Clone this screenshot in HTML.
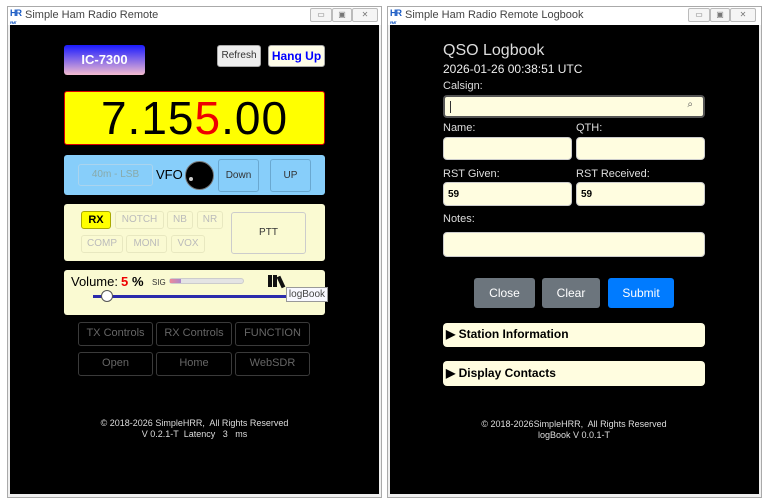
<!DOCTYPE html>
<html><head><style>
*{box-sizing:border-box;margin:0;padding:0}
body{width:767px;height:501px;background:#fff;position:relative;overflow:hidden;font-family:"Liberation Sans",Arial,sans-serif}
.a{position:absolute}
.win{position:absolute;top:6px;height:492px;border:1px solid #aaa;background:#f0f0f0}
.tb{position:absolute;left:0;right:0;top:0;height:18px;background:#fff;font-size:11px;color:#444;line-height:17px;padding-left:17px}
.logo{position:absolute;left:2px;top:2px;font-size:9px;font-weight:bold;color:#1a5bc4;line-height:8px;letter-spacing:-1px}
.ctl{position:absolute;top:1px;height:14px;border:1px solid #bbb;background:#f5f5f5;border-radius:2px;font-size:8px;color:#777;text-align:center;line-height:12px}
.blk{position:absolute;left:2px;right:2px;top:18px;bottom:3px;background:#000}
.btn{position:absolute;border-radius:3px;text-align:center;font-size:10px}
.dk{border:1px solid #3a3a3a;color:#666;line-height:21px;font-size:11px}
.inp{position:absolute;background:#fffde0;border-radius:4px;border:1px solid #ccc}
.lbl{position:absolute;color:#ddd;font-size:11px}
</style></head><body>
<div class="win" style="left:7px;width:375px">
 <div class="tb"><span class="logo">HR<br><span style="font-size:4px">RMT</span></span>Simple Ham Radio Remote
  <div class="ctl" style="left:302px;width:22px">▭</div><div class="ctl" style="left:324px;width:20px">▣</div><div class="ctl" style="left:344px;width:26px">✕</div></div>
 <div class="blk"></div>
</div>
<div class="win" style="left:387px;width:375px">
 <div class="tb"><span class="logo">HR<br><span style="font-size:4px">RMT</span></span>Simple Ham Radio Remote Logbook
  <div class="ctl" style="left:300px;width:22px">▭</div><div class="ctl" style="left:322px;width:20px">▣</div><div class="ctl" style="left:342px;width:26px">✕</div></div>
 <div class="blk"></div>
</div>

<div class="btn" style="left:64px;top:45px;width:81px;height:30px;background:linear-gradient(#1a1aff,#f4bcd0);color:#fff;font-weight:bold;font-size:13px;line-height:30px">IC-7300</div>
<div class="btn" style="left:217px;top:45px;width:44px;height:22px;background:#eee;border:1px solid #aaa;font-size:10px;line-height:20px;color:#333">Refresh</div>
<div class="btn" style="left:268px;top:45px;width:57px;height:22px;background:#fffde8;border:1px solid #aaa;font-size:12px;font-weight:bold;color:#00f;line-height:20px">Hang Up</div>
<div class="a" style="left:64px;top:91px;width:261px;height:54px;background:#ff0;border:1px solid #d00;border-radius:3px;text-align:center;font-size:46px;line-height:52px;color:#000;letter-spacing:1px">7.15<span style="color:#e00">5</span>.00</div>
<div class="a" style="left:64px;top:155px;width:261px;height:40px;background:#87cefa;border-radius:3px"></div>
<div class="btn" style="left:78px;top:164px;width:75px;height:22px;border:1px solid #aad4ee;color:#8aa;line-height:20px">40m - LSB</div>
<div class="a" style="left:156px;top:167px;font-size:13px">VFO</div>
<div class="a" style="left:185px;top:161px;width:29px;height:29px;border-radius:50%;background:#000;border:1px solid #777"></div>
<div class="a" style="left:189px;top:177px;width:4px;height:4px;border-radius:50%;background:#ccc"></div>
<div class="btn" style="left:218px;top:159px;width:41px;height:33px;border:1px solid #6aa8d0;line-height:31px;color:#333">Down</div>
<div class="btn" style="left:270px;top:159px;width:41px;height:33px;border:1px solid #6aa8d0;line-height:31px;color:#333">UP</div>

<div class="a" style="left:64px;top:204px;width:261px;height:57px;background:#fafad2;border-radius:3px"></div>
<div class="btn" style="left:81px;top:211px;width:30px;height:18px;background:#ff0;border:1px solid #aa0;font-weight:bold;line-height:16px;font-size:11px">RX</div>
<div class="btn" style="left:115px;top:211px;width:49px;height:18px;border:1px solid #e8e8c0;color:#bbb;line-height:16px">NOTCH</div>
<div class="btn" style="left:167px;top:211px;width:26px;height:18px;border:1px solid #e8e8c0;color:#bbb;line-height:16px">NB</div>
<div class="btn" style="left:197px;top:211px;width:26px;height:18px;border:1px solid #e8e8c0;color:#bbb;line-height:16px">NR</div>
<div class="btn" style="left:81px;top:235px;width:42px;height:18px;border:1px solid #e8e8c0;color:#bbb;line-height:16px">COMP</div>
<div class="btn" style="left:126px;top:235px;width:41px;height:18px;border:1px solid #e8e8c0;color:#bbb;line-height:16px">MONI</div>
<div class="btn" style="left:171px;top:235px;width:34px;height:18px;border:1px solid #e8e8c0;color:#bbb;line-height:16px">VOX</div>
<div class="btn" style="left:231px;top:212px;width:75px;height:42px;border:1px solid #ccc;line-height:40px;color:#333">PTT</div>

<div class="a" style="left:64px;top:270px;width:261px;height:45px;background:#fafad2;border-radius:3px"></div>
<div class="a" style="left:71px;top:274px;font-size:13px">Volume:</div>
<div class="a" style="left:121px;top:274px;font-size:13px;font-weight:bold;color:#e00">5</div>
<div class="a" style="left:132px;top:274px;font-size:13px;font-weight:bold">%</div>
<div class="a" style="left:152px;top:278px;font-size:8px;color:#333">SIG</div>
<div class="a" style="left:169px;top:278px;width:75px;height:6px;background:#e4e4e4;border:1px solid #ccc;border-radius:3px"></div>
<div class="a" style="left:170px;top:279px;width:11px;height:4px;background:linear-gradient(90deg,#e89,#a8c)"></div>
<div class="a" style="left:268px;top:275px;width:4px;height:12px;background:#111"></div>
<div class="a" style="left:273px;top:275px;width:4px;height:12px;background:#111"></div>
<div class="a" style="left:279px;top:276px;width:4px;height:12px;background:#111;transform:rotate(-25deg)"></div>
<div class="a" style="left:93px;top:295px;width:197px;height:3px;background:#2b2bab"></div>
<div class="a" style="left:101px;top:290px;width:12px;height:12px;border-radius:50%;background:#fff;border:1px solid #555"></div>
<div class="a" style="left:286px;top:287px;width:42px;height:15px;background:#f8f8ff;border:1px solid #999;font-size:10px;line-height:13px;text-align:center;color:#444">logBook</div>

<div class="btn dk" style="left:78px;top:322px;width:75px;height:24px">TX Controls</div>
<div class="btn dk" style="left:156px;top:322px;width:76px;height:24px">RX Controls</div>
<div class="btn dk" style="left:235px;top:322px;width:75px;height:24px">FUNCTION</div>
<div class="btn dk" style="left:78px;top:352px;width:75px;height:24px">Open</div>
<div class="btn dk" style="left:156px;top:352px;width:76px;height:24px">Home</div>
<div class="btn dk" style="left:235px;top:352px;width:75px;height:24px">WebSDR</div>
<div class="a" style="left:64px;top:418px;width:261px;text-align:center;font-size:9px;color:#ddd;line-height:11px">© 2018-2026 SimpleHRR,&nbsp; All Rights Reserved<br>V 0.2.1-T&nbsp; Latency&nbsp;&nbsp; 3&nbsp;&nbsp; ms</div>

<div class="a" style="left:443px;top:42px;font-size:16px;color:#ddd">QSO Logbook</div>
<div class="a" style="left:443px;top:62px;font-size:12px;color:#eee">2026-01-26 00:38:51 UTC</div>
<div class="lbl" style="left:443px;top:80px">Calsign:</div>
<div class="inp" style="left:443px;top:95px;width:262px;height:23px;border:2px solid #555;border-radius:4px"><div class="a" style="left:5px;top:4px;width:1px;height:12px;background:#333"></div><div class="a" style="right:10px;top:2px;font-size:10px;color:#555">⌕</div></div>
<div class="lbl" style="left:443px;top:122px">Name:</div>
<div class="lbl" style="left:576px;top:122px">QTH:</div>
<div class="inp" style="left:443px;top:137px;width:129px;height:23px"></div>
<div class="inp" style="left:576px;top:137px;width:129px;height:23px"></div>
<div class="lbl" style="left:443px;top:168px">RST Given:</div>
<div class="lbl" style="left:576px;top:168px">RST Received:</div>
<div class="inp" style="left:443px;top:182px;width:129px;height:24px;font-size:10px;font-weight:bold;padding:6px 4px">59</div>
<div class="inp" style="left:576px;top:182px;width:129px;height:24px;font-size:10px;font-weight:bold;padding:6px 4px">59</div>
<div class="lbl" style="left:443px;top:213px">Notes:</div>
<div class="inp" style="left:443px;top:232px;width:262px;height:25px"></div>
<div class="btn" style="left:474px;top:278px;width:61px;height:30px;background:#6c757d;color:#fff;font-size:12px;line-height:30px">Close</div>
<div class="btn" style="left:542px;top:278px;width:58px;height:30px;background:#6c757d;color:#fff;font-size:12px;line-height:30px">Clear</div>
<div class="btn" style="left:608px;top:278px;width:66px;height:30px;background:#007bff;color:#fff;font-size:12px;line-height:30px">Submit</div>
<div class="inp" style="left:443px;top:323px;width:262px;height:24px;font-size:12px;font-weight:bold;padding:4px 0 0 3px;border:none">▶ Station Information</div>
<div class="inp" style="left:443px;top:361px;width:262px;height:25px;font-size:12px;font-weight:bold;padding:5px 0 0 3px;border:none">▶ Display Contacts</div>
<div class="a" style="left:443px;top:419px;width:262px;text-align:center;font-size:9px;color:#ddd;line-height:11px">© 2018-2026SimpleHRR,&nbsp; All Rights Reserved<br>logBook V 0.0.1-T</div>
</body></html>
